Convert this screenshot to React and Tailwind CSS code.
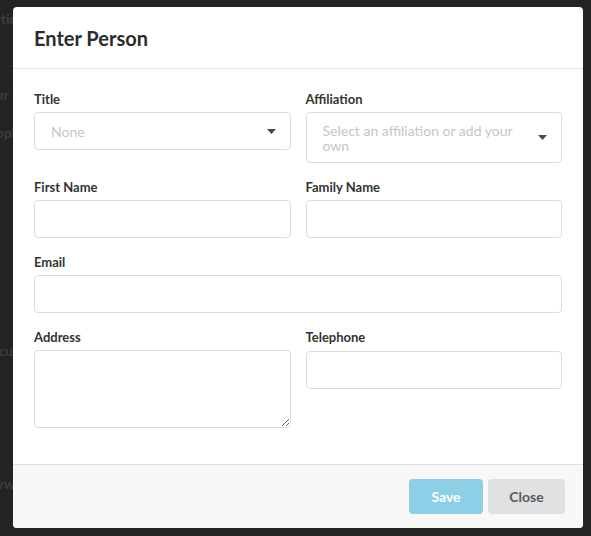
import { useState } from 'react';

const font = { fontFamily: 'Lato, "Open Sans", sans-serif' };

const Label = ({ children }) => (
  <label className="block text-[13px] leading-[17px] font-bold text-[#333] mb-[4px]">{children}</label>
);

const Caret = () => (
  <svg width="9" height="5" viewBox="0 0 9 5" className="shrink-0">
    <path d="M0 0h9L4.5 5z" fill="#4a4a4a" />
  </svg>
);

const inputCls =
  'w-full h-[38px] rounded-[4px] border border-[#dcdcdc] bg-white px-4 text-[14px] text-[#333] outline-none';

function Background() {
  const rows = [
    { t: 'Participants', y: 'pt-[10px]' },
    { t: 'Your', y: 'pt-[58px]' },
    { t: 'People', y: 'pt-[20px]' },
    { t: 'Document', y: 'pt-[200px]' },
    { t: 'Keywords', y: 'pt-[115px]' },
  ];
  return (
    <div className="absolute inset-0 bg-[#232323] overflow-hidden">
      {rows.map((r) => (
        <div key={r.t} className={`${r.y} -ml-[20px] text-[14px] leading-[18px] font-bold text-[#3d3d3d]`}>
          {r.t}
        </div>
      ))}
    </div>
  );
}

export default function App() {
  const [form, setForm] = useState({ first: '', family: '', email: '', address: '', phone: '' });
  const set = (k) => (e) => setForm({ ...form, [k]: e.target.value });

  return (
    <div className="relative w-[591px] h-[536px] overflow-hidden" style={font}>
      <Background />
      <div className="absolute left-[13px] top-[7px] w-[570px] h-[521px] bg-white rounded-[4px] flex flex-col overflow-hidden">
        <div className="h-[62px] shrink-0 border-b border-[#e3e3e3] px-[21px] flex items-center">
          <h2 className="text-[20px] font-bold text-[#2b2b2b] leading-none">Enter Person</h2>
        </div>

        <form className="flex-1 px-[21px] pt-[22px] grid grid-cols-2 gap-x-[15px] gap-y-[16px] content-start">
          <div>
            <Label>Title</Label>
            <div className={`${inputCls} flex items-center justify-between pr-[14px]`}>
              <span className="text-[#c6c6c6]">None</span>
              <Caret />
            </div>
          </div>
          <div>
            <Label>Affiliation</Label>
            <div className="w-full h-[51px] rounded-[4px] border border-[#dcdcdc] bg-white pl-4 pr-[14px] flex items-center justify-between">
              <span className="text-[14px] leading-[15px] text-[#c6c6c6] w-[210px]">
                Select an affiliation or add your own
              </span>
              <Caret />
            </div>
          </div>

          <div>
            <Label>First Name</Label>
            <input className={inputCls} value={form.first} onChange={set('first')} />
          </div>
          <div>
            <Label>Family Name</Label>
            <input className={inputCls} value={form.family} onChange={set('family')} />
          </div>

          <div className="col-span-2">
            <Label>Email</Label>
            <input className={inputCls} value={form.email} onChange={set('email')} />
          </div>

          <div>
            <Label>Address</Label>
            <textarea
              className="block w-full h-[78px] rounded-[4px] border border-[#dcdcdc] bg-white px-4 py-2 text-[14px] text-[#333] outline-none"
              value={form.address}
              onChange={set('address')}
            />
          </div>
          <div>
            <Label>Telephone</Label>
            <input className={`${inputCls} mt-px`} value={form.phone} onChange={set('phone')} />
          </div>
        </form>

        <div className="h-[64px] shrink-0 border-t border-[#dedede] bg-[#f8f8f8] flex items-center justify-end gap-[5px] pr-[18px]">
          <button
            type="button"
            className="w-[74px] h-[35px] rounded-[4px] bg-[#8ccfe6] text-white text-[14px] font-bold"
          >
            Save
          </button>
          <button
            type="button"
            className="w-[77px] h-[35px] rounded-[4px] bg-[#e0e1e2] text-[#5a5a5a] text-[14px] font-bold"
          >
            Close
          </button>
        </div>
      </div>
    </div>
  );
}
